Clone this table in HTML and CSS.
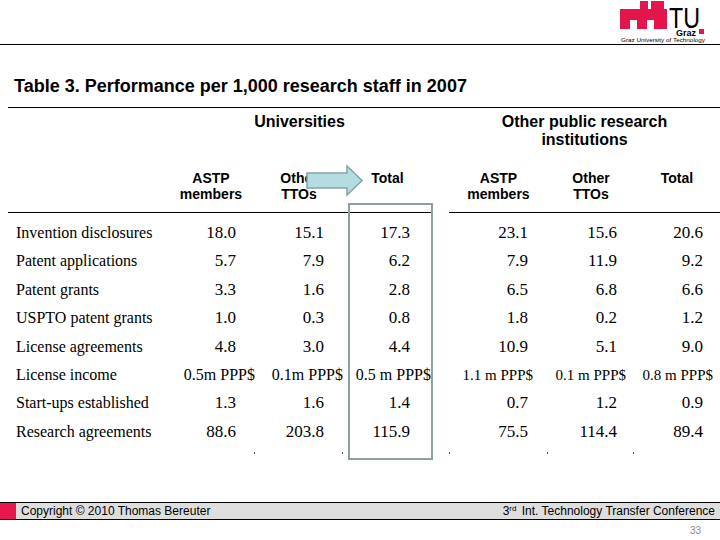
FILE: index.html
```html
<!DOCTYPE html>
<html lang="en">
<head>
<meta charset="utf-8">
<title>Performance per 1,000 research staff</title>
<link rel="stylesheet" href="styles.css">
</head>
<body>
<header class="top">
  <svg class="logo" width="90" height="44" viewBox="0 0 90 44">
    <g class="logo-red">
      <rect x="23" y="1" width="8" height="9"/>
      <rect x="34" y="1" width="13" height="9"/>
      <rect x="3" y="9" width="47" height="11"/>
      <rect x="3" y="19" width="10" height="10"/>
      <rect x="20" y="19" width="10" height="10"/>
      <rect x="37" y="19" width="13" height="10"/>
      <rect x="82" y="29" width="5" height="5"/>
    </g>
    <text class="logo-tu" x="52" y="28" textLength="31" lengthAdjust="spacingAndGlyphs">TU</text>
    <text class="logo-graz" x="59" y="35.5">Graz</text>
    <text class="logo-sub" x="4" y="41.5" textLength="84" lengthAdjust="spacingAndGlyphs">Graz University of Technology</text>
  </svg>
</header>

<h1 class="title">Table 3. Performance per 1,000 research staff in 2007</h1>

<section class="table">
  <div class="row group-row">
    <div></div>
    <div class="group">Universities</div>
    <div></div>
    <div class="group group-right">Other public research<br>institutions</div>
  </div>
  <div class="row head-row">
    <div class="ch"></div>
    <div class="ch">ASTP<br>members</div>
    <div class="ch">Other<br>TTOs</div>
    <div class="ch">Total</div>
    <div class="ch-gap"></div>
    <div class="ch">ASTP<br>members</div>
    <div class="ch">Other<br>TTOs</div>
    <div class="ch">Total</div>
  </div>

  <div class="body">
    <div class="row data"><div class="lab">Invention disclosures</div><div class="n">18.0</div><div class="n">15.1</div><div class="n">17.3</div><div></div><div class="n">23.1</div><div class="n">15.6</div><div class="n">20.6</div></div>
    <div class="row data"><div class="lab">Patent applications</div><div class="n">5.7</div><div class="n">7.9</div><div class="n">6.2</div><div></div><div class="n">7.9</div><div class="n">11.9</div><div class="n">9.2</div></div>
    <div class="row data"><div class="lab">Patent grants</div><div class="n">3.3</div><div class="n">1.6</div><div class="n">2.8</div><div></div><div class="n">6.5</div><div class="n">6.8</div><div class="n">6.6</div></div>
    <div class="row data"><div class="lab">USPTO patent grants</div><div class="n">1.0</div><div class="n">0.3</div><div class="n">0.8</div><div></div><div class="n">1.8</div><div class="n">0.2</div><div class="n">1.2</div></div>
    <div class="row data"><div class="lab">License agreements</div><div class="n">4.8</div><div class="n">3.0</div><div class="n">4.4</div><div></div><div class="n">10.9</div><div class="n">5.1</div><div class="n">9.0</div></div>
    <div class="row data income"><div class="lab">License income</div><div class="n">0.5m PPP$</div><div class="n">0.1m PPP$</div><div class="n">0.5 m PPP$</div><div></div><div class="n">1.1 m PPP$</div><div class="n">0.1 m PPP$</div><div class="n">0.8 m PPP$</div></div>
    <div class="row data"><div class="lab">Start-ups established</div><div class="n">1.3</div><div class="n">1.6</div><div class="n">1.4</div><div></div><div class="n">0.7</div><div class="n">1.2</div><div class="n">0.9</div></div>
    <div class="row data"><div class="lab">Research agreements</div><div class="n">88.6</div><div class="n">203.8</div><div class="n">115.9</div><div></div><div class="n">75.5</div><div class="n">114.4</div><div class="n">89.4</div></div>
    <div class="row dots"><div></div><div class="dr"></div><div class="dr"></div><div class="dr"></div><div></div><div class="dl dr"></div><div class="dr"></div><div></div></div>
  </div>

  <div class="highlight"></div>
  <svg class="arrow" width="60" height="34" viewBox="0 0 60 34">
    <polygon points="2,9 42,9 42,2 57,16.5 42,31 42,24 2,24"/>
  </svg>
</section>

<footer class="foot">
  <div class="bar">
    <span class="mark"></span>
    <span class="copy">Copyright © 2010 Thomas Bereuter</span>
    <span class="conf">3<sup>rd</sup> Int. Technology Transfer Conference</span>
  </div>
  <div class="pageno">33</div>
</footer>
</body>
</html>
```

FILE: styles.css
```css
* { box-sizing: border-box; }

html, body { margin: 0; padding: 0; }

body {
  width: 720px;
  height: 540px;
  overflow: hidden;
  display: flex;
  flex-direction: column;
  background: #ffffff;
  color: #000000;
  font-family: "Liberation Sans", Arial, sans-serif;
}

/* ---------- header ---------- */
.top {
  height: 45px;
  border-bottom: 1px solid #000;
  display: flex;
  justify-content: flex-end;
  align-items: flex-start;
  padding-right: 13px;
  flex: none;
}
.logo { display: block; }
.logo-red { fill: #e4154b; }
.logo-tu { font-family: "Liberation Sans", Arial, sans-serif; font-size: 29px; fill: #000; }
.logo-graz { font-family: "Liberation Sans", Arial, sans-serif; font-size: 9px; font-weight: bold; fill: #000; }
.logo-sub { font-family: "Liberation Sans", Arial, sans-serif; font-size: 5.6px; fill: #000; }

/* ---------- title ---------- */
.title {
  margin: 0;
  padding: 31px 0 0 14px;
  font-size: 18px;
  line-height: 21px;
  font-weight: bold;
  flex: none;
}

/* ---------- table ---------- */
.table {
  --cols: 159px 88px 88px 89px 17px 99px 86px 86px;
  position: relative;
  margin: 10px 0 0 8px;
  width: 712px;
  border-top: 1px solid #000;
  flex: none;
}

.row {
  display: grid;
  grid-template-columns: var(--cols);
}

.group-row {
  padding: 5px 0 21px;
  font-size: 16px;
  line-height: 18px;
  font-weight: bold;
  text-align: center;
}
.group { grid-column: 2 / 5; }
.group-right { grid-column: 6 / 9; }

.head-row {
  font-size: 14px;
  line-height: 16px;
  font-weight: bold;
  text-align: center;
}
.ch {
  border-bottom: 1px solid #000;
  padding-bottom: 10px;
  min-height: 43px;
}

.body { padding-top: 6px; }

.data {
  height: 28.4px;
  line-height: 28.4px;
  font-family: "Liberation Serif", "Times New Roman", serif;
  white-space: nowrap;
}
.lab {
  font-size: 16px;
  padding-left: 8px;
}
.n {
  font-size: 17px;
  text-align: right;
}
.data .n:nth-child(2) { padding-right: 19px; }
.data .n:nth-child(3) { padding-right: 19px; }
.data .n:nth-child(4) { padding-right: 22px; }
.data .n:nth-child(6) { padding-right: 20px; }
.data .n:nth-child(7) { padding-right: 17px; }
.data .n:nth-child(8) { padding-right: 17px; }

.income .n:nth-child(2),
.income .n:nth-child(3),
.income .n:nth-child(4) { font-size: 16px; padding-right: 0; }
.income .n:nth-child(4) { padding-right: 1px; }
.income .n:nth-child(6),
.income .n:nth-child(7),
.income .n:nth-child(8) { font-size: 15px; }
.income .n:nth-child(6) { padding-right: 15px; }
.income .n:nth-child(7) { padding-right: 8px; }
.income .n:nth-child(8) { padding-right: 7px; }

.dots {
  height: 2px;
  margin-top: 6px;
}
.dots .dr { border-right: 1px solid #555; }
.dots .dl { border-left: 1px solid #555; }

/* highlight overlay */
.highlight {
  position: absolute;
  left: 340px;
  top: 95px;
  width: 85px;
  height: 257px;
  border: 2px solid #8d9f9f;
}
.arrow {
  position: absolute;
  left: 297px;
  top: 56px;
}
.arrow polygon {
  fill: #b5dce1;
  stroke: #86a2a6;
  stroke-width: 1.5;
}

/* ---------- footer ---------- */
.foot {
  margin-top: auto;
  flex: none;
}
.bar {
  height: 18px;
  display: flex;
  align-items: center;
  background: #dedede;
  border-top: 1px solid #000;
  border-bottom: 1px solid #000;
  font-size: 12px;
  line-height: 16px;
}
.mark {
  align-self: stretch;
  width: 16px;
  background: #e8174f;
}
.copy { padding-left: 5px; }
.conf {
  margin-left: auto;
  padding-right: 5px;
}
.conf sup {
  font-size: 8px;
  line-height: 0;
  vertical-align: 4px;
  margin-right: 2px;
}
.pageno {
  height: 20px;
  padding: 5px 19px 0 0;
  text-align: right;
  font-size: 10px;
  line-height: 12px;
  color: #8a8a8a;
}
```
